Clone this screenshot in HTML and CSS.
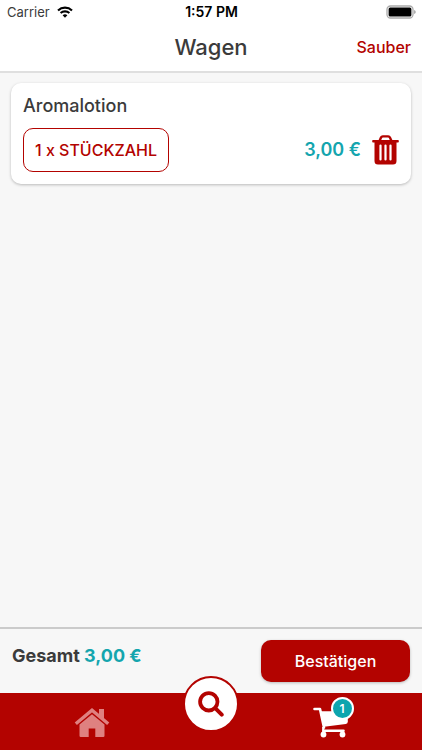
FILE: index.html
```html
<!DOCTYPE html>
<html lang="de">
<head>
<meta charset="utf-8">
<meta name="viewport" content="width=device-width, initial-scale=1">
<title>Wagen</title>
<link rel="stylesheet" href="styles.css">
</head>
<body>
<header class="header">
  <div class="status">
    <div class="carrier">
      <span>Carrier</span>
      <svg class="wifi" viewBox="0 0 16 12" aria-hidden="true">
        <path d="M1 4.4a10.2 10.2 0 0 1 14 0M3.6 7.1a6.4 6.4 0 0 1 8.8 0" fill="none" stroke="#000" stroke-width="2.1"/>
        <path d="M5.6 9.2a3.6 3.6 0 0 1 4.8 0L8 11.7z"/>
      </svg>
    </div>
    <span class="time">1:57 PM</span>
    <svg class="battery" viewBox="0 0 30 14" aria-hidden="true">
      <rect x="1" y="1" width="26" height="12" rx="3.5" fill="#fff" stroke="#aaa" stroke-width="1.3"/>
      <rect x="2.6" y="2.6" width="22.8" height="8.8" rx="1.5"/>
      <path d="M28.3 5v4q1.3-.5 1.3-2t-1.3-2z" fill="#888"/>
    </svg>
  </div>
  <div class="titlebar">
    <h1 class="title">Wagen</h1>
    <button class="clear" type="button">Sauber</button>
  </div>
</header>
<main class="content">
  <article class="card">
    <h2 class="name">Aromalotion</h2>
    <div class="row">
      <button class="quantity" type="button">1 x STÜCKZAHL</button>
      <span class="price">3,00 €</span>
      <button class="remove" type="button" aria-label="Entfernen">
        <svg class="trash" viewBox="0 0 27 30" aria-hidden="true">
          <path d="M7.5 6 9 2.6q.5-1.2 1.800-1.200h5.400q1.300 0 1.800 1.200L19.500 6" fill="none" stroke="#b30300" stroke-width="2.400"/>
          <path d="M1 4.900h25q.8 0 .8.800v1.100q0 .8-.8.800h-1.500v18.400q0 3.500-3.500 3.500H6q-3.500 0-3.500-3.500V7.600H1q-.8 0-.8-.8V5.700q0-.8.800-.8z" fill="#b30300"/>
          <path d="M8.500 10.500v14M13.500 10.500v14M18.500 10.500v14" stroke="#fff" stroke-width="2.200" stroke-linecap="round"/>
        </svg>
      </button>
    </div>
  </article>
</main>
<section class="summary">
  <p class="total">Gesamt <span class="amount">3,00 €</span></p>
  <button class="confirm" type="button">Bestätigen</button>
</section>
<nav class="tabs">
  <a class="tab" href="#home" aria-label="Startseite">
    <svg class="home" viewBox="0 0 36 30" aria-hidden="true">
      <path d="M1.800 15.800 18 2.300l16.200 13.500" fill="none" stroke="#df8180" stroke-width="3.400"/>
      <path d="M25 1h5v11.500l-5-4.200zM18 6.300l12.500 10.300v11.200q0 1.200-1.200 1.200h-8v-8.500h-6.600V29h-8q-1.200 0-1.200-1.200V16.600z" fill="#df8180"/>
    </svg>
  </a>
  <a class="search" href="#suche" aria-label="Suche">
    <svg class="glass" viewBox="0 0 26 26" aria-hidden="true">
      <circle cx="10.800" cy="10.800" r="8.700" fill="none" stroke="#b30300" stroke-width="3.800"/>
      <path d="m17.200 17.200 6.500 6.500" stroke="#b30300" stroke-width="4" stroke-linecap="round"/>
    </svg>
  </a>
  <a class="tab" href="#wagen" aria-label="Wagen">
    <span class="cart-wrap">
      <svg class="cart" viewBox="0 0 36 31" aria-hidden="true">
        <path d="M1.500 2H7l4 18.500M11 23.700h19.500" fill="none" stroke="#fff" stroke-width="2.600" stroke-linecap="round" stroke-linejoin="round"/>
        <path d="M7.500 4.200h27.300v10.600q0 2-2 2.300L11.200 19.800z" fill="#fff"/>
        <path d="M10.200 20v5" stroke="#fff" stroke-width="2.200"/>
        <circle cx="10.500" cy="27.500" r="2.900" fill="#fff"/>
        <circle cx="29.500" cy="27.500" r="2.900" fill="#fff"/>
      </svg>
      <span class="badge">1</span>
    </span>
  </a>
</nav>
</body>
</html>
```
FILE: styles.css
```css
* { box-sizing: border-box; }

body {
  margin: 0;
  min-height: 100vh;
  display: flex;
  flex-direction: column;
  background: #f7f7f7;
  color: #3b3b3b;
  font-family: Inter, "Liberation Sans", sans-serif;
  font-size: 16px;
  line-height: 20px;
}

button {
  padding: 0;
  border: 0;
  background: none;
  color: #b30300;
  font: inherit;
  cursor: pointer;
}

h1, h2, p { margin: 0; }
svg { display: block; }

.header {
  background: #fff;
  border-bottom: 2px solid #dfdfdf;
}

.status {
  display: grid;
  grid-template-columns: 1fr auto 1fr;
  align-items: center;
  height: 24px;
  padding: 0 6px 0 7px;
  font-size: 13px;
}

.carrier {
  display: flex;
  align-items: center;
  gap: 7px;
}

.wifi { width: 16px; height: 12px; }

.time {
  color: #000;
  font-size: 14px;
  font-weight: 600;
}

.battery {
  width: 30px;
  height: 14px;
  justify-self: end;
}

.titlebar {
  display: grid;
  grid-template-columns: 1fr auto 1fr;
  align-items: center;
  height: 47px;
  padding: 0 11px 2px;
}

.title {
  grid-column: 2;
  font-size: 22px;
  font-weight: 500;
  line-height: 28px;
}

.clear {
  justify-self: end;
  font-weight: 500;
}

.content {
  flex: 1;
  padding: 10px 11px;
}

.card {
  padding: 12px;
  border-radius: 10px;
  background: #fff;
  box-shadow: 0 1px 3px rgba(0, 0, 0, 0.25);
}

.name {
  font-size: 18px;
  font-weight: 500;
  line-height: 22px;
}

.row {
  display: flex;
  align-items: center;
  margin-top: 11px;
}

.quantity {
  height: 44px;
  padding: 0 11px;
  border: 1px solid #b30300;
  border-radius: 10px;
  font-weight: 500;
}

.price {
  margin-left: auto;
  color: #14a5ae;
  font-size: 18px;
  font-weight: 600;
}

.remove { margin-left: 11px; }
.trash { width: 27px; height: 30px; }

.summary {
  display: flex;
  justify-content: space-between;
  align-items: flex-start;
  padding: 11px 12px;
  border-top: 2px solid #cbcbcb;
}

.total {
  padding-top: 6px;
  font-size: 18px;
  font-weight: 700;
}

.amount { color: #14a5ae; }

.confirm {
  width: 36%;
  min-width: 149px;
  height: 42px;
  border-radius: 10px;
  background: #b30300;
  box-shadow: 0 1px 3px rgba(0, 0, 0, 0.25);
  color: #fff;
  font-weight: 500;
}

.tabs {
  display: grid;
  grid-template-columns: 1fr 56px 1fr;
  height: 57px;
  background: #b30300;
}

.tab {
  display: flex;
  justify-content: center;
  align-items: center;
  padding-top: 2px;
}

.home { width: 36px; height: 30px; }

.search {
  display: flex;
  justify-content: center;
  align-items: center;
  width: 56px;
  height: 56px;
  margin-top: -17px;
  border: 2px solid #b30300;
  border-radius: 50%;
  background: #fff;
}

.glass { width: 26px; height: 26px; }
.cart-wrap { position: relative; }
.cart { width: 36px; height: 31px; }

.badge {
  position: absolute;
  top: -10px;
  right: -5px;
  width: 23px;
  height: 23px;
  border: 2px solid #fff;
  border-radius: 50%;
  background: #0da5ae;
  color: #fff;
  font-size: 12px;
  font-weight: 600;
  line-height: 19px;
  text-align: center;
}
```
